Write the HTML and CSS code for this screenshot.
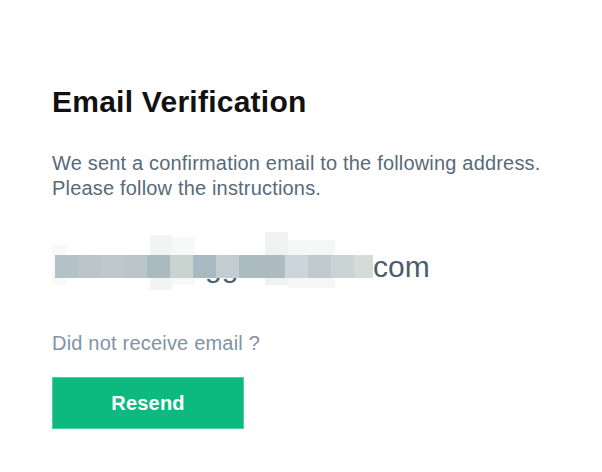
FILE: index.html
```html
<!DOCTYPE html>
<html lang="en">
<head>
    <meta charset="UTF-8">
    <meta name="viewport" content="width=device-width, initial-scale=1.0">
    <title>Email Verification</title>
    <link rel="stylesheet" href="styles.css">
</head>
<body>

<div class="verify">
    <h1 class="verify-title">Email Verification</h1>

    <p class="verify-text">
        We sent a confirmation email to the following address.<br>
        Please follow the instructions.
    </p>

    <div class="verify-email">
        <!-- pixelated address -->
        <span class="mosaic">
            <span class="ghost g1"></span>
            <span class="ghost g2"></span>
            <span class="ghost g3"></span>
            <span class="ghost g4"></span>
            <span class="ghost g5"></span>
            <span class="peek">gg</span>
            <span class="tile t1"></span>
            <span class="tile t2"></span>
            <span class="tile t3"></span>
            <span class="tile t4"></span>
            <span class="tile t5"></span>
            <span class="tile t6"></span>
            <span class="tile t7"></span>
            <span class="tile t8"></span>
            <span class="tile t9"></span>
            <span class="tile t10"></span>
            <span class="tile t11"></span>
            <span class="tile t12"></span>
            <span class="tile t13"></span>
            <span class="tile t14"></span>
        </span>
        <span class="email-end">com</span>
    </div>

    <p class="verify-hint">Did not receive email ?</p>

    <button class="resend-btn">Resend</button>
</div>

</body>
</html>
```

FILE: styles.css
```css
/* General */
body {
    margin: 0;
    background-color: #fff;
    font-family: "Liberation Sans", Arial, sans-serif;
}

/* Page block */
.verify {
    padding: 84px 0 0 52px;
}

.verify-title {
    margin: 0;
    font-size: 30px;
    line-height: 36px;
    font-weight: bold;
    letter-spacing: 0.25px;
    color: #111;
}

.verify-text {
    margin: 31px 0 0;
    font-size: 20px;
    line-height: 25px;
    letter-spacing: 0.18px;
    color: #596a7a;
}

/* Email line with mosaic */
.verify-email {
    display: flex;
    align-items: flex-start;
    margin-top: 48px;
    height: 36px;
    font-size: 30px;
    line-height: 36px;
    color: #4b5d6e;
}

.mosaic {
    position: relative;
    display: flex;
    margin: 6px 0 0 3px;
    height: 23px;
}

.tile {
    position: relative;
    width: 23px;
    height: 23px;
}

.t1 { background: #b3c1c8; }
.t2 { background: #bcc6c8; }
.t3 { background: #bec9cc; }
.t4 { background: #bac6c8; }
.t5 { background: #a9bac1; }
.t6 { background: #c9d3d0; }
.t7 { background: #a9b9c1; }
.t8 { background: #c3ccce; }
.t9 { background: #adbcc2; }
.t10 { background: #aebcc1; }
.t11 { background: #ccd5dc; }
.t12 { background: #c0cacc; }
.t13 { background: #cbd4d4; }
.t14 { background: #d4dcda; width: 19px; }

/* faint pixel blocks around the band */
.ghost {
    position: absolute;
    background: #f3f5f5;
}

.g1 { left: -3px; top: -10px; width: 15px; height: 40px; background: #faf9f8; }
.g2 { left: 95px; top: -20px; width: 22px; height: 55px; }
.g3 { left: 117px; top: -18px; width: 23px; height: 48px; background: #f7f8f8; }
.g4 { left: 210px; top: -23px; width: 23px; height: 53px; background: #f0f2f2; }
.g5 { left: 233px; top: -15px; width: 47px; height: 48px; background: #f5f7f7; }

/* letters showing under the band */
.peek {
    position: absolute;
    left: 150px;
    top: -6px;
    line-height: 36px;
    color: #4b5d6e;
}

.email-end {
    display: block;
}

.verify-hint {
    margin: 46px 0 0;
    font-size: 20px;
    line-height: 25px;
    letter-spacing: 0.2px;
    color: #8193a3;
}

/* Button */
.resend-btn {
    display: block;
    margin-top: 21px;
    width: 192px;
    height: 52px;
    background-color: #0cba7f;
    border: 1px solid #4fcf9f;
    color: #fff;
    font-family: "Liberation Sans", Arial, sans-serif;
    font-size: 20px;
    font-weight: bold;
    letter-spacing: 0.2px;
    cursor: pointer;
}
```
